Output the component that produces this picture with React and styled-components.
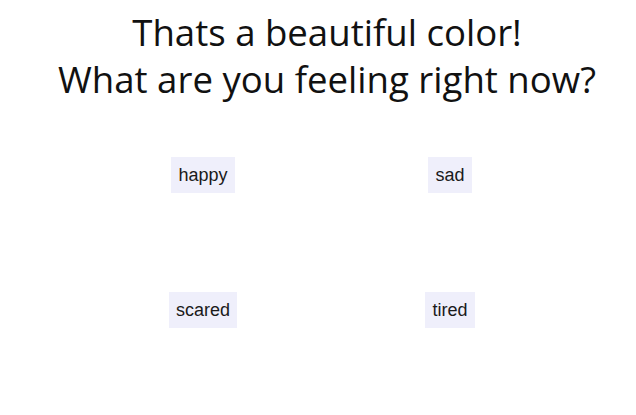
import styled, { createGlobalStyle } from "styled-components";

const GlobalStyle = createGlobalStyle`
  body {
    margin: 0;
    background: #ffffff;
  }
`;

const Page = styled.div`
  width: 636px;
  padding-top: 9px;
`;

const Title = styled.h1`
  margin: 0;
  font-family: "Open Sans", "Noto Sans", sans-serif;
  font-weight: 400;
  font-size: 36.6px;
  line-height: 47px;
  color: #111111;
  text-align: center;
  padding-left: 18px;
`;

const Feelings = styled.div`
  display: grid;
  grid-template-columns: 247px 247px;
  grid-auto-rows: 135px;
  justify-content: center;
  justify-items: center;
  align-items: start;
  margin-top: 54px;
  padding-left: 17px;
`;

const Feeling = styled.button`
  font-family: "Liberation Sans", Arial, sans-serif;
  font-size: 18px;
  color: #1a1a1a;
  background: #efeffb;
  border: none;
  border-radius: 0;
  padding: 8px 7px;
  line-height: 20px;
  cursor: pointer;
`;

const feelings = ["happy", "sad", "scared", "tired"];

export default function App() {
  return (
    <Page>
      <GlobalStyle />
      <Title>
        Thats a beautiful color!
        <br />
        What are you feeling right now?
      </Title>
      <Feelings>
        {feelings.map((f) => (
          <Feeling key={f}>{f}</Feeling>
        ))}
      </Feelings>
    </Page>
  );
}
